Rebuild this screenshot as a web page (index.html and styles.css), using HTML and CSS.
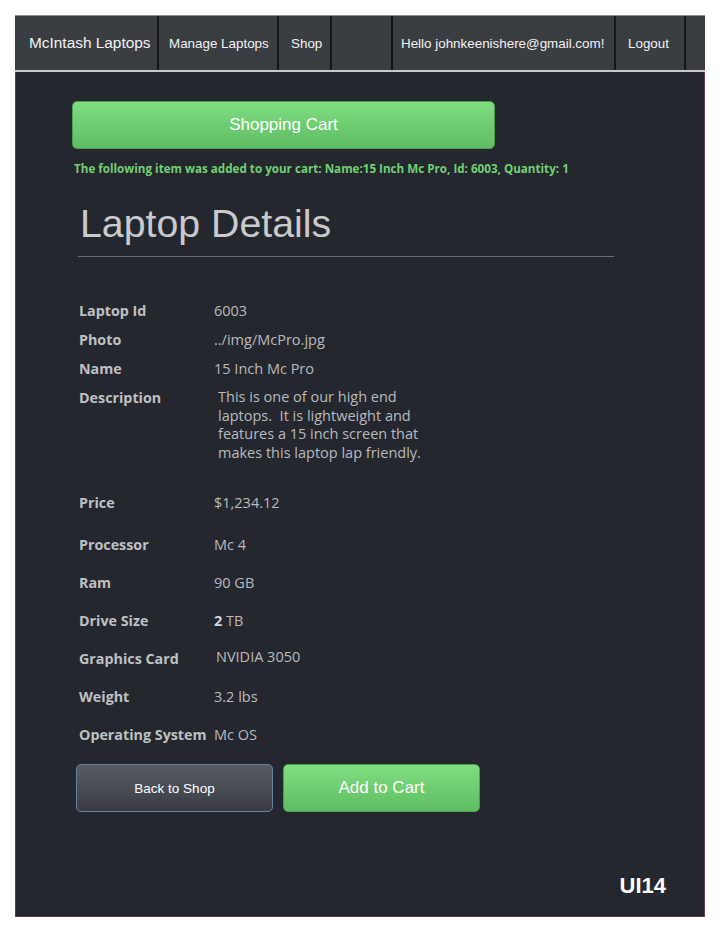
FILE: index.html
```html
<!DOCTYPE html>
<html>
<head>
<meta charset="utf-8">
<link rel="stylesheet" href="styles.css">
</head>
<body>
<div class="frame">
  <nav class="nav">
    <div class="cell brand">McIntash Laptops</div>
    <div class="cell c-manage">Manage Laptops</div>
    <div class="cell c-shop">Shop</div>
    <div class="cell c-empty"></div>
    <div class="cell c-hello">Hello johnkeenishere@gmail.com!</div>
    <div class="cell c-logout">Logout</div>
    <div class="cell c-end"></div>
  </nav>
  <main class="content">
    <button class="btn btn-green btn-cart">Shopping Cart</button>
    <p class="msg">The following item was added to your cart: Name:15 Inch Mc Pro, Id: 6003, Quantity: 1</p>
    <h1 class="title">Laptop Details</h1>
    <hr class="rule">
    <div class="details">
      <div class="row r-tight"><div class="lbl">Laptop Id</div><div class="val">6003</div></div>
      <div class="row r-tight"><div class="lbl">Photo</div><div class="val">../img/McPro.jpg</div></div>
      <div class="row r-tight"><div class="lbl">Name</div><div class="val">15 Inch Mc Pro</div></div>
      <div class="row r-desc"><div class="lbl">Description</div><div class="val desc">This is one of our high end laptops.&nbsp; It is lightweight and features a 15 inch screen that makes this laptop lap friendly.</div></div>
      <div class="row r-price"><div class="lbl">Price</div><div class="val">$1,234.12</div></div>
      <div class="row r-std"><div class="lbl">Processor</div><div class="val">Mc 4</div></div>
      <div class="row r-std"><div class="lbl">Ram</div><div class="val">90 GB</div></div>
      <div class="row r-std"><div class="lbl">Drive Size</div><div class="val"><b>2</b> TB</div></div>
      <div class="row r-std"><div class="lbl">Graphics Card</div><div class="val gpu">NVIDIA 3050</div></div>
      <div class="row r-std"><div class="lbl">Weight</div><div class="val">3.2 lbs</div></div>
      <div class="row r-last"><div class="lbl">Operating System</div><div class="val">Mc OS</div></div>
    </div>
    <div class="actions">
      <button class="btn btn-dark">Back to Shop</button>
      <button class="btn btn-green btn-add">Add to Cart</button>
    </div>
  </main>
  <div class="tag">UI14</div>
</div>
</body>
</html>
```
FILE: styles.css
```css
* { box-sizing: border-box; }
html, body { margin: 0; padding: 0; background: #ffffff; }
body { padding: 15px 0 0 15px; }

.frame {
  width: 690px;
  height: 902px;
  background: #25272e;
  border-left: 1px solid #6e3a42;
  border-right: 1px solid #6e3a42;
  border-bottom: 1px solid #6e3a42;
  display: flex;
  flex-direction: column;
  position: relative;
  font-family: "Liberation Sans", Arial, sans-serif;
}

.nav {
  display: flex;
  height: 57px;
  background: #3a3d42;
  border-top: 1px solid #8a8d92;
  border-bottom: 2px solid #c6c8cc;
  margin-left: -1px;
  margin-right: -1px;
}
.cell {
  display: flex;
  align-items: center;
  color: #f2f2f2;
  font-size: 13.4px;
  border-right: 2px solid #15171a;
  padding-left: 12px;
  white-space: nowrap;
}
.brand { width: 144px; font-size: 15.4px; padding-left: 14px; }
.c-manage { width: 120px; padding-left: 10px; }
.c-shop { width: 53px; padding-left: 12px; }
.c-empty { width: 61px; }
.c-hello { width: 223px; padding-left: 8px; }
.c-logout { width: 70px; padding-left: 12px; }
.c-end { flex: 1; border-right: none; }

.content {
  padding: 29px 0 0 56px;
  display: flex;
  flex-direction: column;
}

.btn {
  font-family: "Liberation Sans", Arial, sans-serif;
  color: #ffffff;
  border-radius: 5px;
  cursor: pointer;
}
.btn-green {
  background: linear-gradient(#7fde80, #5fbd62);
  border: 1px solid #4f9c52;
  font-size: 17px;
}
.btn-cart { width: 423px; height: 48px; }

.msg {
  margin: 13px 0 0 2px;
  color: #6fd071;
  font-family: "Open Sans", sans-serif;
  font-weight: 700;
  font-size: 11.65px;
  letter-spacing: 0;
  line-height: 14px;
  white-space: nowrap;
}

.title {
  margin: 25px 0 0 8px;
  font-weight: 400;
  font-size: 39.3px;
  line-height: 44px;
  color: #c9cacd;
}
.rule {
  margin: 11px 0 0 6px;
  width: 536px;
  border: none;
  border-top: 1px solid #6a6d73;
  height: 0;
}

.details {
  margin: 44px 0 0 7px;
  font-family: "Open Sans", sans-serif;
  font-size: 14.3px;
  line-height: 20px;
}
.row { display: flex; }
.lbl {
  width: 135px;
  font-weight: 700;
  color: #bfc0c3;
  letter-spacing: 0;
  white-space: nowrap;
}
.val { color: #b9babd; font-size: 14.5px; letter-spacing: 0; }
.val b { color: #d4d5d8; }
.r-tight { height: 29px; }
.r-desc { height: 105px; }
.r-price { height: 42px; }
.r-std { height: 38px; }
.r-last { height: 19px; }
.desc { width: 225px; line-height: 18.5px; padding-left: 4px; }
.gpu { padding-left: 2px; margin-top: -2px; }

.actions {
  display: flex;
  gap: 10px;
  margin: 20px 0 0 4px;
}
.btn-dark {
  width: 197px;
  height: 48px;
  background: linear-gradient(#575c64, #393c43);
  border: 1px solid #6c81a6;
  font-size: 13.5px;
}
.btn-add { width: 197px; height: 48px; }

.tag {
  position: absolute;
  right: 38px;
  bottom: 17px;
  color: #ffffff;
  font-size: 22px;
  font-weight: 700;
  font-family: "Liberation Sans", Arial, sans-serif;
}
```
